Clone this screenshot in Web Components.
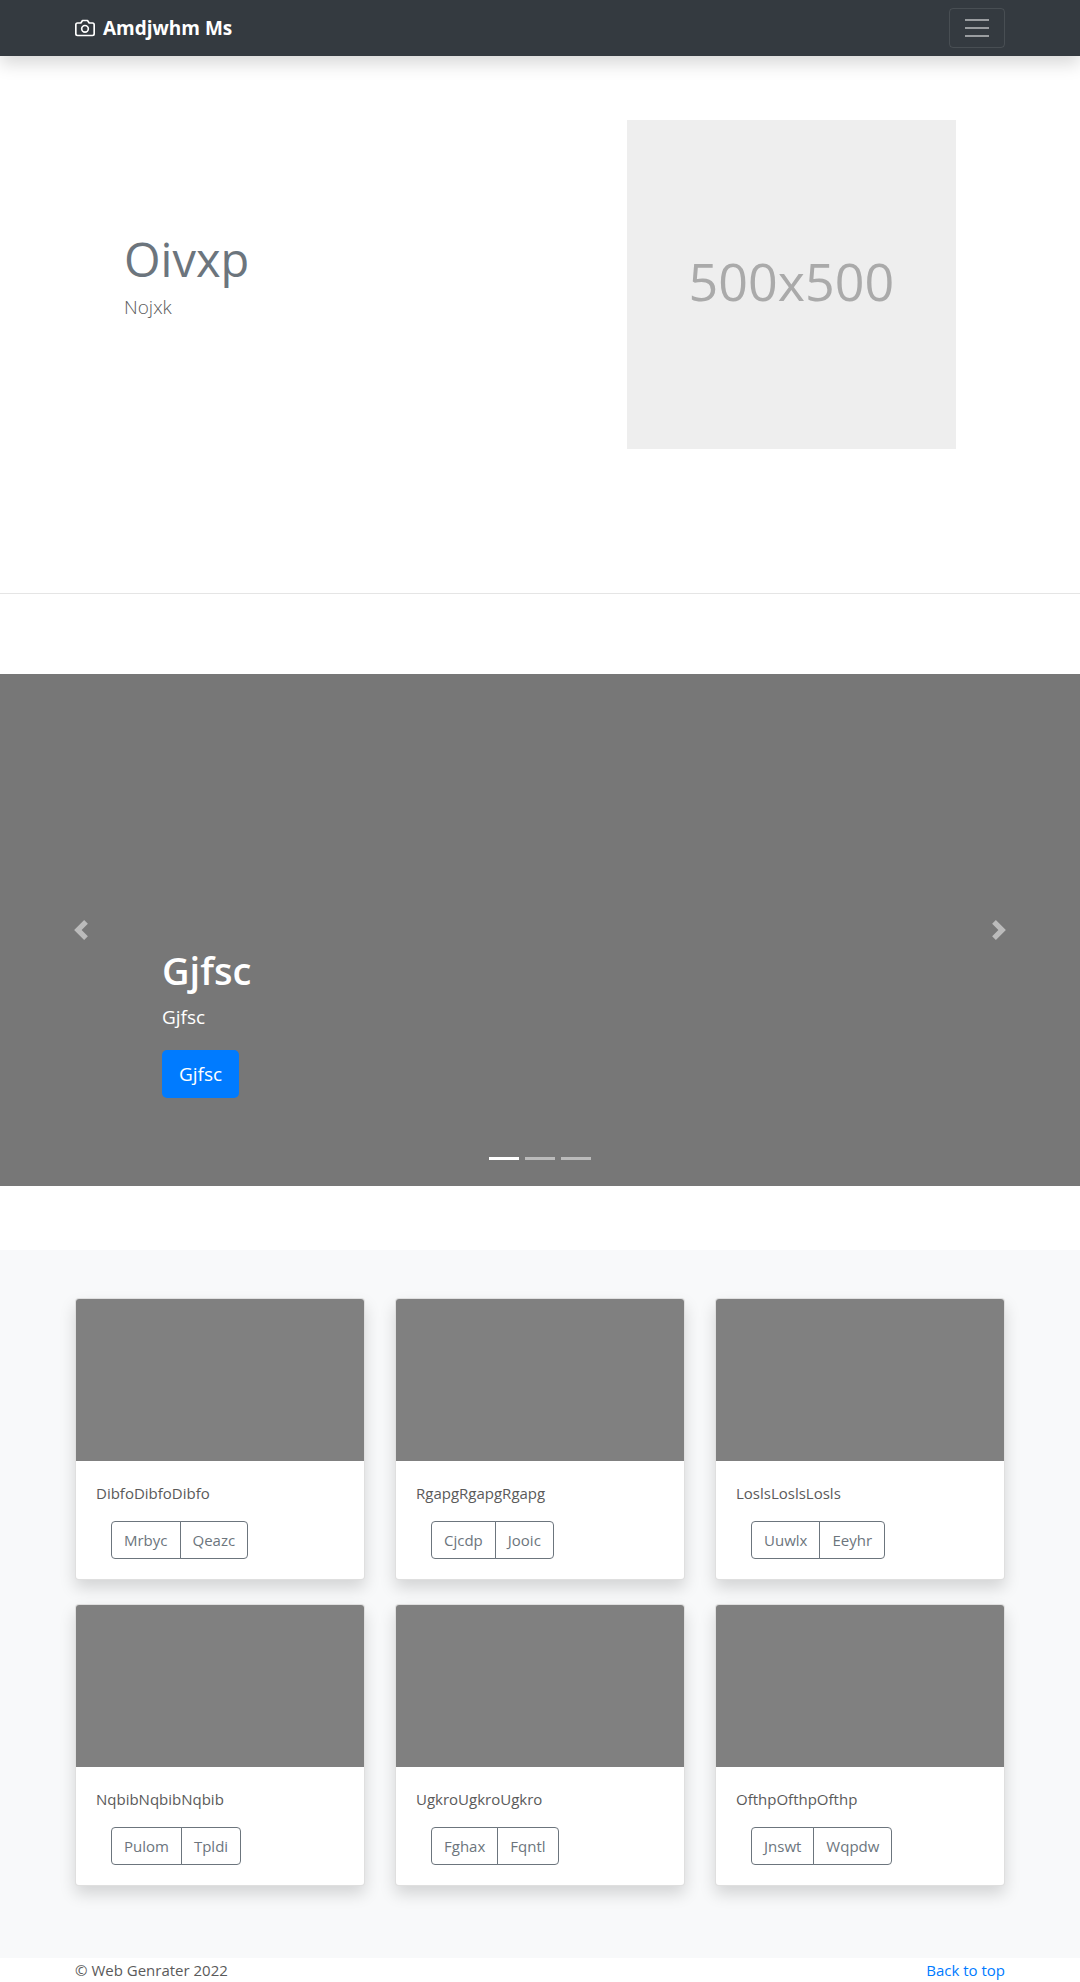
<!DOCTYPE html>
<html lang="en">
<head>
<meta charset="utf-8">
<meta name="viewport" content="width=device-width, initial-scale=1">
<title>Amdjwhm Ms</title>
<style>
  body {
    margin: 0;
    background: #fff;
    color: #5a5a5a;
    font: 400 15px/24px "Open Sans", "Noto Sans", sans-serif;
    --gutter: 15px;
    --container: 930px;
    --muted: #6c757d;
    --shadow: 0 8px 16px rgba(0, 0, 0, .15);
  }
  .album {
    background: #f8f9fa;
    padding: 48px 0;
    margin-top: 64px;
  }
  hr {
    margin: 0 0 80px;
    border: 0;
    border-top: 1px solid rgba(0, 0, 0, .1);
  }
</style>
</head>
<body>
<site-navbar>Amdjwhm Ms</site-navbar>
<main>
  <hero-feature size="500x500">
    <span slot="title">Oivxp</span>
    <span slot="lead">Nojxk</span>
  </hero-feature>
  <hr>
  <promo-carousel>
    <span slot="title">Gjfsc</span>
    <span slot="text">Gjfsc</span>
    <span slot="action">Gjfsc</span>
  </promo-carousel>
  <div class="album">
    <card-grid>
      <album-card first="Mrbyc" second="Qeazc">DibfoDibfoDibfo</album-card>
      <album-card first="Cjcdp" second="Jooic">RgapgRgapgRgapg</album-card>
      <album-card first="Uuwlx" second="Eeyhr">LoslsLoslsLosls</album-card>
      <album-card first="Pulom" second="Tpldi">NqbibNqbibNqbib</album-card>
      <album-card first="Fghax" second="Fqntl">UgkroUgkroUgkro</album-card>
      <album-card first="Jnswt" second="Wqpdw">OfthpOfthpOfthp</album-card>
    </card-grid>
  </div>
</main>
<site-footer>© Web Genrater 2022</site-footer>

<script>
const define = (name, html, setup) => {
  const template = document.createElement('template');
  template.innerHTML = html;
  customElements.define(name, class extends HTMLElement {
    constructor() {
      super();
      this.attachShadow({ mode: 'open' }).append(template.content.cloneNode(true));
    }
    connectedCallback() {
      if (setup) setup(this, this.shadowRoot);
    }
  });
};

define('site-navbar', `
  <style>
    :host { display: block; position: relative; background: #343a40; box-shadow: var(--shadow); }
    nav { display: flex; align-items: center; justify-content: space-between; max-width: var(--container); margin: 0 auto; padding: 8px var(--gutter); }
    a { display: flex; align-items: center; gap: 8px; color: #fff; font-size: 19px; font-weight: 700; line-height: 30px; text-decoration: none; }
    button { display: flex; padding: 4px 12px; border: 1px solid rgba(255,255,255,.1); border-radius: 4px; background: none; }
    svg { display: block; fill: none; }
  </style>
  <nav>
    <a href="#">
      <svg width="20" height="20" viewBox="0 0 24 24" stroke="#fff" stroke-width="2" stroke-linecap="round" stroke-linejoin="round" aria-hidden="true"><path d="M23 19a2 2 0 0 1-2 2H3a2 2 0 0 1-2-2V8a2 2 0 0 1 2-2h4l2-3h6l2 3h4a2 2 0 0 1 2 2z"/><circle cx="12" cy="13" r="4"/></svg>
      <slot></slot>
    </a>
    <button type="button" aria-label="Toggle navigation">
      <svg width="30" height="30" viewBox="0 0 30 30" stroke="#fff" stroke-opacity=".5" stroke-width="2"><path d="M3 7h24M3 15h24M3 23h24"/></svg>
    </button>
  </nav>`);

define('hero-feature', `
  <style>
    :host { display: block; padding: 64px var(--gutter) 144px; }
    section { display: grid; grid-template-columns: repeat(12, 1fr); column-gap: 30px; box-sizing: border-box; max-width: var(--container); margin: 0 auto; padding: 0 49px; }
    .text { grid-column: span 7; padding-top: 114px; }
    h2 { margin: 0 0 8px; color: var(--muted); font-size: 47px; font-weight: 400; line-height: 50px; }
    p { margin: 0; font-size: 19px; font-weight: 300; line-height: 30px; }
    .image { grid-column: span 5; display: flex; align-items: center; justify-content: center; box-sizing: border-box; aspect-ratio: 1; padding-bottom: 8px; background: #eee; color: #aaa; font-size: 52px; line-height: 60px; }
  </style>
  <section>
    <div class="text">
      <h2><slot name="title"></slot></h2>
      <p><slot name="lead"></slot></p>
    </div>
    <div class="image"></div>
  </section>`,
  (host, root) => { root.querySelector('.image').textContent = host.getAttribute('size'); });

define('promo-carousel', `
  <style>
    :host { display: flex; flex-direction: column; justify-content: flex-end; position: relative; box-sizing: border-box; min-height: 512px; padding: 0 15% 88px; background: #777; color: #fff; }
    h1 { margin: 0 0 8px; font-size: 38px; font-weight: 600; line-height: 48px; }
    p { margin: 0 0 18px; font-size: 19px; line-height: 30px; }
    .action { align-self: flex-start; padding: 9px 17px; border-radius: 5px; background: #007bff; color: #fff; font-size: 19px; line-height: 30px; text-decoration: none; }
    .control { position: absolute; top: 0; bottom: 0; display: flex; align-items: center; justify-content: center; width: 15%; padding: 0; border: 0; background: none; opacity: .5; }
    .prev { left: 0; }
    .next { right: 0; }
    .dots { position: absolute; left: 0; right: 0; bottom: 16px; display: flex; justify-content: center; gap: 6px; }
    .dots button { box-sizing: content-box; width: 30px; height: 3px; padding: 10px 0; border: 0; background: #fff content-box; opacity: .5; }
    .dots .active { opacity: 1; }
  </style>
  <h1><slot name="title"></slot></h1>
  <p><slot name="text"></slot></p>
  <a class="action" href="#"><slot name="action"></slot></a>
  <button class="control prev" type="button" aria-label="Previous"><svg width="20" height="20" viewBox="0 0 8 8" fill="#fff"><path d="M5.25 0l-4 4 4 4 1.5-1.5-2.5-2.5 2.5-2.5-1.5-1.5z"/></svg></button>
  <button class="control next" type="button" aria-label="Next"><svg width="20" height="20" viewBox="0 0 8 8" fill="#fff"><path d="M2.75 0l-1.5 1.5 2.5 2.5-2.5 2.5 1.5 1.5 4-4-4-4z"/></svg></button>
  <div class="dots">
    <button class="active" type="button" aria-label="Slide 1"></button>
    <button type="button" aria-label="Slide 2"></button>
    <button type="button" aria-label="Slide 3"></button>
  </div>`);

define('card-grid', `
  <style>
    :host { display: block; padding: 0 var(--gutter) 24px; }
    div { display: grid; grid-template-columns: repeat(3, minmax(0, 1fr)); gap: 24px 30px; max-width: var(--container); margin: 0 auto; }
  </style>
  <div><slot></slot></div>`);

define('album-card', `
  <style>
    :host { display: block; border: 1px solid rgba(0,0,0,.125); border-radius: 4px; background: #fff; box-shadow: var(--shadow); }
    .cover { aspect-ratio: 16 / 9; border-radius: 3px 3px 0 0; background: #808080; }
    .body { padding: 20px; }
    p { margin: 0 0 16px; }
    .group { display: flex; padding: 0 15px; }
    button { padding: 6px 12px; border: 1px solid var(--muted); background: none; color: var(--muted); font: inherit; }
    button:first-child { border-radius: 4px 0 0 4px; }
    button:last-child { margin-left: -1px; border-radius: 0 4px 4px 0; }
  </style>
  <div class="cover"></div>
  <div class="body">
    <p><slot></slot></p>
    <div class="group"><button type="button"></button><button type="button"></button></div>
  </div>`,
  (host, root) => {
    const [first, second] = root.querySelectorAll('button');
    first.textContent = host.getAttribute('first');
    second.textContent = host.getAttribute('second');
  });

define('site-footer', `
  <style>
    :host { display: block; padding: 0 var(--gutter); }
    footer { display: flex; justify-content: space-between; max-width: var(--container); margin: 0 auto; }
    a { color: #007bff; text-decoration: none; }
  </style>
  <footer><span><slot></slot></span><a href="#">Back to top</a></footer>`);
</script>
</body>
</html>
